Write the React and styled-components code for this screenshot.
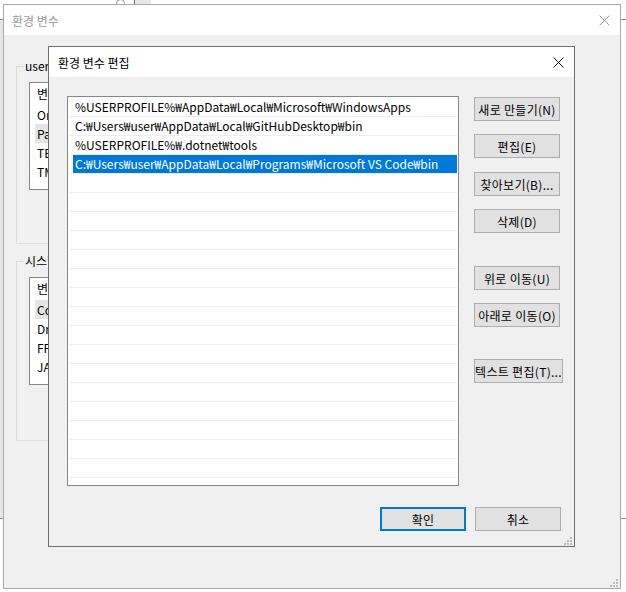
import React from 'react';
import styled, { createGlobalStyle } from 'styled-components';

const GlobalStyle = createGlobalStyle`
  html, body {
    margin: 0;
    padding: 0;
    background: #ffffff;
  }
  body {
    font-family: 'Noto Sans CJK KR', 'Noto Sans', sans-serif;
    font-size: 12px;
    color: #000000;
  }
`;

const userVars = ['OneDrive', 'Path', 'TEMP', 'TMP'];
const systemVars = ['ComSpec', 'DriverData', 'FPS_BROWSER_APP_PROFILE_STRING', 'JAVA_HOME'];

const pathEntries = [
  '%USERPROFILE%₩AppData₩Local₩Microsoft₩WindowsApps',
  'C:₩Users₩user₩AppData₩Local₩GitHubDesktop₩bin',
  '%USERPROFILE%₩.dotnet₩tools',
  'C:₩Users₩user₩AppData₩Local₩Programs₩Microsoft VS Code₩bin',
];

const sideButtons = [
  { label: '새로 만들기(N)', gap: 0 },
  { label: '편집(E)', gap: 13 },
  { label: '찾아보기(B)...', gap: 14 },
  { label: '삭제(D)', gap: 13 },
  { label: '위로 이동(U)', gap: 33 },
  { label: '아래로 이동(O)', gap: 13 },
  { label: '텍스트 편집(T)...', gap: 32, wide: true },
];

const CloseIcon = ({ color }) => (
  <svg width="11" height="11" viewBox="0 0 11 11">
    <path d="M0.5 0.5 L10.5 10.5 M10.5 0.5 L0.5 10.5" stroke={color} strokeWidth="1" fill="none" />
  </svg>
);

const Grip = () => (
  <GripWrap>
    <svg width="8" height="8" viewBox="0 0 8 8">
      <g fill="#bcbcbc">
        <rect x="6" y="0" width="2" height="2" />
        <rect x="3" y="3" width="2" height="2" />
        <rect x="6" y="3" width="2" height="2" />
        <rect x="0" y="6" width="2" height="2" />
        <rect x="3" y="6" width="2" height="2" />
        <rect x="6" y="6" width="2" height="2" />
      </g>
    </svg>
  </GripWrap>
);

const VarList = ({ items, selected }) => (
  <SmallList>
    <SmallHeader>변수</SmallHeader>
    {items.map((name) => (
      <SmallRow key={name} $selected={name === selected}>
        {name}
      </SmallRow>
    ))}
  </SmallList>
);

const App = () => {
  const rows = [...pathEntries, ...Array(16).fill('')];
  return (
    <>
      <GlobalStyle />
      <Desktop>
        <BehindWindow>
          <BehindEdge />
        </BehindWindow>
        <TopStrip>
          <TopArc />
          <TopTab />
        </TopStrip>

        <Window $left={3} $top={4} $width={618} $height={585} $border="#a9a9a9">
          <TitleBar $pad={8} $inactive>
            환경 변수
            <CloseIcon color="#9a9a9a" />
          </TitleBar>
          <BackBody>
            <GroupBox $height={186}>
              <GroupLabel>user에 대한 사용자 변수(U)</GroupLabel>
              <VarList items={userVars} selected="Path" />
            </GroupBox>
            <GroupBox $height={188}>
              <GroupLabel>시스템 변수(S)</GroupLabel>
              <VarList items={systemVars} selected="ComSpec" />
            </GroupBox>
          </BackBody>
          <Grip />
        </Window>

        <Window $left={48} $top={46} $width={527} $height={501} $border="#6f6f6f">
          <TitleBar $pad={9}>
            환경 변수 편집
            <CloseIcon color="#111111" />
          </TitleBar>
          <DialogBody>
            <MainRow>
              <PathList>
                {rows.map((text, i) => (
                  <PathRow key={i}>
                    <PathCell $selected={i === 3}>{text}</PathCell>
                  </PathRow>
                ))}
              </PathList>
              <ButtonColumn>
                {sideButtons.map((b) => (
                  <Button key={b.label} $mt={b.gap} $wide={b.wide}>
                    {b.label}
                  </Button>
                ))}
              </ButtonColumn>
            </MainRow>
            <Footer>
              <Button $default>확인</Button>
              <Button>취소</Button>
            </Footer>
          </DialogBody>
          <Grip />
        </Window>
      </Desktop>
    </>
  );
};

const Desktop = styled.div`
  position: relative;
  width: 626px;
  height: 592px;
  overflow: hidden;
  background: #ffffff;
`;

const BehindWindow = styled.div`
  position: absolute;
  left: -10px;
  top: 19px;
  width: 660px;
  height: 498px;
  border-top: 1px solid #8a8a8a;
  border-bottom: 1px solid #8a8a8a;
  background: #ffffff;
`;

const BehindEdge = styled.div`
  width: 13px;
  height: 100%;
  background: #e6e6e6;
`;

const TopStrip = styled.div`
  position: absolute;
  left: 116px;
  top: 0;
  display: flex;
  align-items: flex-end;
  height: 4px;
`;

const TopArc = styled.div`
  width: 7px;
  height: 7px;
  margin-bottom: -4px;
  border: 1px solid #9a9a9a;
  border-radius: 50%;
  margin-right: 9px;
`;

const TopTab = styled.div`
  width: 16px;
  height: 4px;
  border-left: 1px solid #707070;
  background: #e8e8e8;
`;

const Window = styled.div`
  position: absolute;
  left: ${({ $left }) => $left}px;
  top: ${({ $top }) => $top}px;
  width: ${({ $width }) => $width}px;
  height: ${({ $height }) => $height}px;
  box-sizing: border-box;
  border: 1px solid ${({ $border }) => $border};
  background: #f0f0f0;
  display: flex;
  flex-direction: column;
`;

const TitleBar = styled.div`
  height: 30px;
  flex-shrink: 0;
  background: #ffffff;
  display: flex;
  align-items: center;
  justify-content: space-between;
  padding: 0 10px 0 ${({ $pad }) => $pad}px;
  color: ${({ $inactive }) => ($inactive ? '#999999' : '#000000')};
  font-size: 12px;
`;

const BackBody = styled.div`
  display: flex;
  flex-direction: column;
  gap: 9px;
  padding: 23px 70px 0 12px;
`;

const GroupBox = styled.fieldset`
  margin: 0;
  padding: 0 12px;
  box-sizing: border-box;
  height: ${({ $height }) => $height}px;
  border: 1px solid #dcdcdc;
  min-width: 0;
`;

const GroupLabel = styled.legend`
  padding: 0 1px;
  margin-left: -5px;
  line-height: 16px;
  font-size: 12px;
  white-space: nowrap;
`;

const SmallList = styled.div`
  margin-top: 8px;
  height: 108px;
  box-sizing: border-box;
  border: 1px solid #828790;
  background: #ffffff;
  padding: 0 5px;
`;

const SmallHeader = styled.div`
  height: 22px;
  line-height: 22px;
  padding-left: 2px;
`;

const SmallRow = styled.div`
  height: 19px;
  line-height: 19px;
  padding-left: 2px;
  background: ${({ $selected }) => ($selected ? '#e5e5e5' : 'transparent')};
`;

const DialogBody = styled.div`
  flex: 1;
  display: flex;
  flex-direction: column;
  padding: 19px 13px 15px 18px;
`;

const MainRow = styled.div`
  display: flex;
  align-items: flex-start;
  gap: 15px;
`;

const PathList = styled.div`
  width: 392px;
  height: 390px;
  flex-shrink: 0;
  box-sizing: border-box;
  border: 1px solid #828790;
  background: #ffffff;
  padding-top: 1px;
  overflow: hidden;
`;

const PathRow = styled.div`
  display: flex;
  height: 18px;
  margin: 0 1px;
  border-bottom: 1px solid #ededed;
`;

const PathCell = styled.div`
  flex: 1;
  margin-left: 4px;
  padding-left: 2px;
  line-height: 18px;
  white-space: nowrap;
  background: ${({ $selected }) => ($selected ? '#0078d7' : 'transparent')};
  color: ${({ $selected }) => ($selected ? '#ffffff' : '#000000')};
`;

const ButtonColumn = styled.div`
  display: flex;
  flex-direction: column;
  align-items: flex-start;
  padding-top: 1px;
`;

const Button = styled.div`
  box-sizing: border-box;
  width: ${({ $wide }) => ($wide ? 89 : 86)}px;
  height: 24px;
  margin-top: ${({ $mt }) => $mt || 0}px;
  display: flex;
  align-items: center;
  justify-content: center;
  white-space: nowrap;
  background: #e1e1e1;
  border: ${({ $default }) => ($default ? '2px solid #0078d7' : '1px solid #adadad')};
  font-size: 12px;
  letter-spacing: 0.3px;
  color: #000000;
`;

const Footer = styled.div`
  margin-top: auto;
  display: flex;
  justify-content: flex-end;
  gap: 9px;
`;

const GripWrap = styled.div`
  position: absolute;
  right: 2px;
  bottom: 1px;
  display: flex;
`;

export default App;
